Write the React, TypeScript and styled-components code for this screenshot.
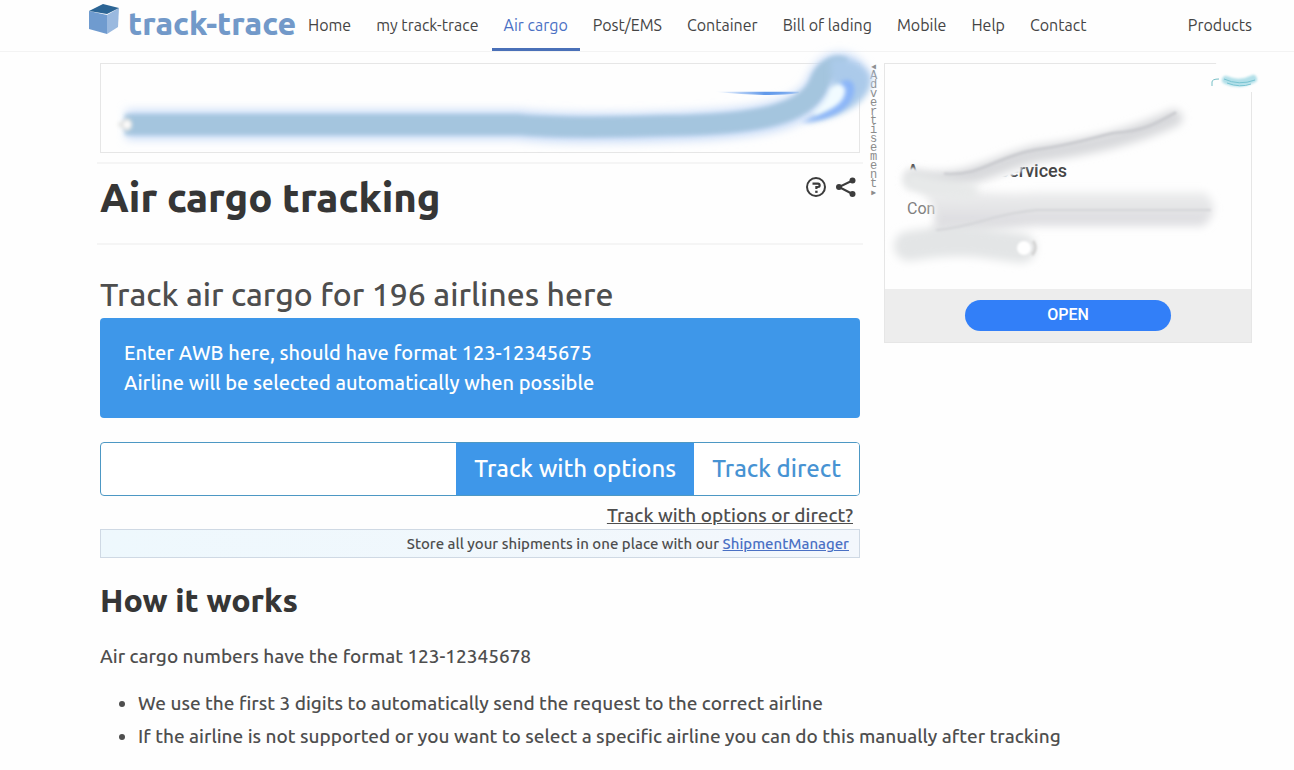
import React from "react";
import styled, { createGlobalStyle } from "styled-components";

const Global = createGlobalStyle`
  *, *::before, *::after { box-sizing: border-box; }
  body {
    margin: 0;
    background: #fefefe;
    color: #4e4e4e;
    font: 500 19px/28px Ubuntu, "Noto Sans", sans-serif;
    overflow-x: hidden;
  }
  h1, h2, p, ul { margin: 0; }
  button, input { font-family: inherit; font-weight: inherit; }
`;

const Header = styled.header`
  display: flex;
  height: 52px;
  padding: 0 30px 0 88px;
  border-bottom: 1px solid #f3f3f3;
`;

const Brand = styled.a`
  display: flex;
  align-items: center;
  gap: 8px;
  width: 208px;
  padding-bottom: 6px;
  color: #7299c9;
  font-size: 32px;
  line-height: 44px;
  font-weight: 800;
  white-space: nowrap;
  text-decoration: none;
  svg { flex: none; margin-bottom: 8px; }
`;

const Nav = styled.nav`
  display: flex;
  flex: 1;
  gap: 1px;
`;

const NavLink = styled.a<{ $active?: boolean; $last?: boolean }>`
  display: flex;
  align-items: center;
  height: 51px;
  padding: 2px 12px 0;
  padding-right: ${(p) => (p.$last ? "0" : "12px")};
  margin-right: ${(p) => (p.$last ? "12px" : "0")};
  margin-left: ${(p) => (p.$last ? "auto" : "0")};
  border-bottom: 3px solid ${(p) => (p.$active ? "#4a70b8" : "transparent")};
  color: ${(p) => (p.$active ? "#4a70c4" : "#444")};
  font-size: 16px;
  line-height: 24px;
  font-weight: 400;
  white-space: nowrap;
  text-decoration: none;
`;

const Page = styled.main`
  padding: 11px 42px 16px 100px;
`;

const Top = styled.div`
  display: flex;
  align-items: flex-start;
`;

const Tracking = styled.div`
  flex: 1;
  min-width: 0;
`;

const Banner = styled.div`
  position: relative;
  z-index: 1;
  height: 90px;
  border: 1px solid #e6e6e6;
`;

const Overlay = styled.svg`
  position: absolute;
  inset: 0;
  width: 100%;
  height: 100%;
  overflow: visible;
  pointer-events: none;
`;

const TitleRow = styled.div`
  display: flex;
  justify-content: space-between;
  height: 83px;
  margin: 9px -3px 0;
  padding: 10px 6px 0 3px;
  border: solid #f5f5f5;
  border-width: 2px 0;
`;

const Title = styled.h1`
  color: #363636;
  font-size: 40px;
  line-height: 48px;
  font-weight: 800;
`;

const Actions = styled.div`
  display: flex;
  gap: 8px;
  padding-top: 2px;
`;

const IconButton = styled.button`
  display: flex;
  width: 22px;
  height: 22px;
  padding: 0;
  border: 0;
  background: none;
  color: #3c3c3c;
`;

const Subtitle = styled.h2`
  padding-bottom: 1px;
  margin-top: 26px;
  font-size: 32px;
  line-height: 46px;
  font-weight: 500;
  white-space: nowrap;
`;

const Notice = styled.label`
  display: block;
  padding: 20px 24px;
  border-radius: 4px;
  background: #3e97e9;
  color: #fff;
  font-size: 20px;
  line-height: 30px;
`;

const Form = styled.form`
  display: flex;
  height: 54px;
  margin-top: 24px;
  border: 1px solid #4d98c4;
  border-radius: 4px;
  background: #fff;
  overflow: hidden;
`;

const AwbInput = styled.input`
  flex: 1;
  min-width: 0;
  padding: 0 18px;
  border: 0;
  outline: 0;
  background: transparent;
  font-size: 24px;
`;

const TrackButton = styled.button<{ $filled?: boolean }>`
  padding: 0 18px;
  border: 0;
  background: ${(p) => (p.$filled ? "#3e97e9" : "#fff")};
  color: ${(p) => (p.$filled ? "#fff" : "#4793d3")};
  font-size: 24px;
  line-height: 36px;
  white-space: nowrap;
`;

const HelpLine = styled.p`
  padding: 5px 7px 0;
  text-align: right;
  a { color: inherit; }
`;

const Promo = styled.p`
  padding: 0 10px;
  border: 1px solid #cfd9e4;
  background: linear-gradient(90deg, #eef8fd, #f3f7fc);
  font-size: 15px;
  line-height: 27px;
  text-align: right;
  a { color: #4a70c4; }
`;

const AdLabel = styled.div`
  flex: none;
  width: 8px;
  margin: 0 7px 0 10px;
  color: #8c8c8c;
  font: 12px/9px "Liberation Mono", monospace;
  word-break: break-all;
`;

const Card = styled.aside`
  position: relative;
  flex: none;
  width: 368px;
  margin-left: -1px;
  border: 1px solid #e6e6e6;
`;

const CardBody = styled.div`
  height: 225px;
  padding: 93px 22px 0;
  font-family: Roboto, sans-serif;
`;

const CardTitle = styled.p`
  display: flex;
  justify-content: space-between;
  width: 160px;
  color: #444;
  font-size: 18px;
  line-height: 27px;
  font-weight: 500;
`;

const CardText = styled.p`
  margin-top: 13px;
  color: #808080;
  font-size: 16px;
  line-height: 24px;
  font-weight: 400;
`;

const CardFooter = styled.div`
  padding: 11px 10px;
  background: #ededed;
  text-align: center;
`;

const OpenButton = styled.button`
  display: block;
  width: 206px;
  height: 31px;
  margin: 0 auto;
  padding: 0 0 2px;
  border: 0;
  border-radius: 16px;
  background: #327ff8;
  color: #fff;
  && { font: 500 16px/24px Roboto, sans-serif; }
`;

const SectionTitle = styled.h2`
  margin-top: 22px;
  color: #363636;
  font-size: 32px;
  line-height: 40px;
  font-weight: 800;
`;

const Body = styled.div`
  margin-top: 22px;
  ul { margin-top: 17px; padding-left: 38px; }
  li { line-height: 33px; }
`;

const links = ["Home", "my track-trace", "Air cargo", "Post/EMS", "Container", "Bill of lading", "Mobile", "Help", "Contact"];

const Cube = () => (
  <svg width="32" height="32" viewBox="0 0 32 32" aria-hidden="true">
    <path d="M1 8 19 12V31L1 26Z" fill="#6f9bcf" />
    <path d="M19 12 31 5 30 24 19 31Z" fill="#9ab9df" />
    <path d="M1 8 15 1 31 5 19 11Z" fill="#2c6595" />
  </svg>
);

const BannerSmear = () => (
  <Overlay viewBox="0 0 760 90" aria-hidden="true">
    <defs>
      <filter id="soft" filterUnits="userSpaceOnUse" x="-20" y="-40" width="820" height="160"><feGaussianBlur stdDeviation="5" /></filter>
      <filter id="mid" filterUnits="userSpaceOnUse" x="-20" y="-40" width="820" height="160"><feGaussianBlur stdDeviation="3" /></filter>
      <filter id="fine" filterUnits="userSpaceOnUse" x="-20" y="-40" width="820" height="160"><feGaussianBlur stdDeviation="2" /></filter>
      <linearGradient id="edge"><stop offset="0" stopColor="#6aa0ee" stopOpacity="0" /><stop offset=".6" stopColor="#5f98ea" /><stop offset="1" stopColor="#6aa0ee" /></linearGradient>
    </defs>
    <path d="M620 28.500H706V30Q675 34 620 28.500Z" fill="url(#edge)" />
    <g fill="none" strokeLinejoin="round">
      <path d="M18 62H420C450 66 520 66 570 64C670 62 714 51 728 22C736 -2 758 -4 768 22" stroke="#c9dcf7" strokeWidth="30" filter="url(#soft)" />
      <path d="M17 62H420C450 65 520 65 570 63C665 62 712 51 726 22C732 4 744 0 752 4" stroke="#a4c5de" strokeWidth="21" filter="url(#fine)" />
    </g>
    <path d="M738 -4C756 -10 786 4 778 26C770 44 744 56 712 60C740 44 742 22 738 -4Z" fill="#abcaea" filter="url(#mid)" />
    <path d="M748 20C756 12 766 18 762 32C756 48 738 57 708 60C738 48 748 38 748 20Z" fill="#8bb5f8" filter="url(#fine)" />
    <path d="M722 51Q736 38 739 26Q748 18 752 26Q753 42 722 51Z" fill="#f1fbff" stroke="#f1fbff" strokeWidth="3" filter="url(#fine)" />
    <path d="M20 55Q27 62 20 69L9 62Z" fill="#dededb" filter="url(#fine)" />
    <circle cx="19" cy="62" r="4" fill="#fff" filter="url(#fine)" />
  </Overlay>
);

const CardSmear = () => (
  <Overlay viewBox="0 0 366 278" aria-hidden="true">
    <defs>
      <filter id="haze" filterUnits="userSpaceOnUse" x="-20" y="0" width="420" height="240"><feGaussianBlur stdDeviation="4" /></filter>
      <filter id="line" filterUnits="userSpaceOnUse" x="-20" y="0" width="420" height="240"><feGaussianBlur stdDeviation="1" /></filter>
      <linearGradient id="fade" x2="0" y2="1"><stop offset="0" stopColor="#f0f1f1" /><stop offset=".65" stopColor="#dddde0" /><stop offset="1" stopColor="#ebebec" /></linearGradient>
    </defs>
    <path d="M20 103Q50 113 98 99L136 96V108L117 115L88 123L60 130L20 128Z" fill="#fdfdfd" filter="url(#line)" />
    <path d="M50 133Q58 138 50 156H70V133Z" fill="#f4f5f5" filter="url(#line)" />
    <path d="M30 120Q110 132 150 128H320Q338 146 318 162H150Q90 168 40 180Q64 150 30 120Z" fill="url(#fade)" filter="url(#haze)" />
    <g fill="none" strokeLinecap="round" strokeLinejoin="round">
      <path d="M28 114C80 124 110 99 150 90C210 82 250 72 289 54" stroke="#d8d9dc" strokeWidth="17" filter="url(#haze)" />
      <path d="M60 110C98 112 110 93 150 86C194 80 216 71 230 69C260 67 274 58 290 49" stroke="#cbccd0" strokeWidth="3" filter="url(#line)" />
      <path d="M28 117Q50 123 84 128" stroke="#e7e9e9" strokeWidth="18" filter="url(#haze)" />
      <path d="M24 182Q60 176 90 178L136 184" stroke="#e3e5e6" strokeWidth="30" filter="url(#haze)" />
      <path d="M52 166C92 162 108 150 152 146H325" stroke="#d4d5d8" strokeWidth="2" filter="url(#line)" />
    </g>
    <circle cx="139" cy="184" r="7" fill="#fff" filter="url(#line)" />
    <path d="M148 177Q153 184 147 191" fill="none" stroke="#d2d2d2" strokeWidth="3" filter="url(#line)" />
    <path d="M330 -4H374V28H340Z" fill="#fefefe" />
    <path d="M327 22V18Q327 15 334 15" fill="none" stroke="#77bfc6" strokeWidth="1" />
    <path d="M341 16Q354 22 368 15" fill="none" stroke="#b2e0e9" strokeWidth="8" strokeLinecap="round" filter="url(#line)" />
    <path d="M339 15Q354 22 370 16M342 19Q355 24 366 20" fill="none" stroke="#79c4d2" strokeWidth="1" />
  </Overlay>
);

export default function App() {
  return (
    <>
      <Global />
      <Header>
        <Brand href="#"><Cube />track-trace</Brand>
        <Nav aria-label="Main">
          {links.map((l) => (
            <NavLink key={l} href="#" $active={l === "Air cargo"}>{l}</NavLink>
          ))}
          <NavLink href="#" $last>Products</NavLink>
        </Nav>
      </Header>
      <Page>
        <Top>
          <Tracking>
            <Banner><BannerSmear /></Banner>
            <TitleRow>
              <Title>Air cargo tracking</Title>
              <Actions>
                <IconButton aria-label="Help">
                  <svg width="22" height="22" viewBox="0 0 22 22" fill="none" stroke="currentColor" strokeWidth="2">
                    <circle cx="11" cy="11" r="9" />
                    <path d="M7.500 7.600H13q1.600 0 1.600 1.400v.6q0 1.400-1.600 1.400h-1.600V13" strokeWidth="2.2" />
                    <path d="M10.200 15.800h2.400" strokeWidth="2.2" />
                  </svg>
                </IconButton>
                <IconButton aria-label="Share">
                  <svg width="22" height="22" viewBox="0 0 22 22" fill="currentColor">
                    <path d="M17.500 4.500 4 11l13.500 7" fill="none" stroke="currentColor" strokeWidth="2" />
                    <circle cx="4" cy="11" r="3" /><circle cx="17.5" cy="4.5" r="3" /><circle cx="17.5" cy="18" r="3" />
                  </svg>
                </IconButton>
              </Actions>
            </TitleRow>
            <Subtitle>Track air cargo for 196 airlines here</Subtitle>
            <Notice htmlFor="awb">
              Enter AWB here, should have format 123-12345675<br />
              Airline will be selected automatically when possible
            </Notice>
            <Form onSubmit={(e) => e.preventDefault()}>
              <AwbInput id="awb" type="text" />
              <TrackButton type="submit" $filled>Track with options</TrackButton>
              <TrackButton type="button">Track direct</TrackButton>
            </Form>
            <HelpLine><a href="#">Track with options or direct?</a></HelpLine>
            <Promo>Store all your shipments in one place with our <a href="#">ShipmentManager</a></Promo>
          </Tracking>
          <AdLabel>◂Advertisement▸</AdLabel>
          <Card>
            <CardBody>
              <CardTitle><span>A</span><span>Services</span></CardTitle>
              <CardText>Con</CardText>
            </CardBody>
            <CardFooter><OpenButton>OPEN</OpenButton></CardFooter>
            <CardSmear />
          </Card>
        </Top>
        <SectionTitle>How it works</SectionTitle>
        <Body>
          <p>Air cargo numbers have the format 123-12345678</p>
          <ul>
            <li>We use the first 3 digits to automatically send the request to the correct airline</li>
            <li>If the airline is not supported or you want to select a specific airline you can do this manually after tracking</li>
          </ul>
        </Body>
      </Page>
    </>
  );
}
